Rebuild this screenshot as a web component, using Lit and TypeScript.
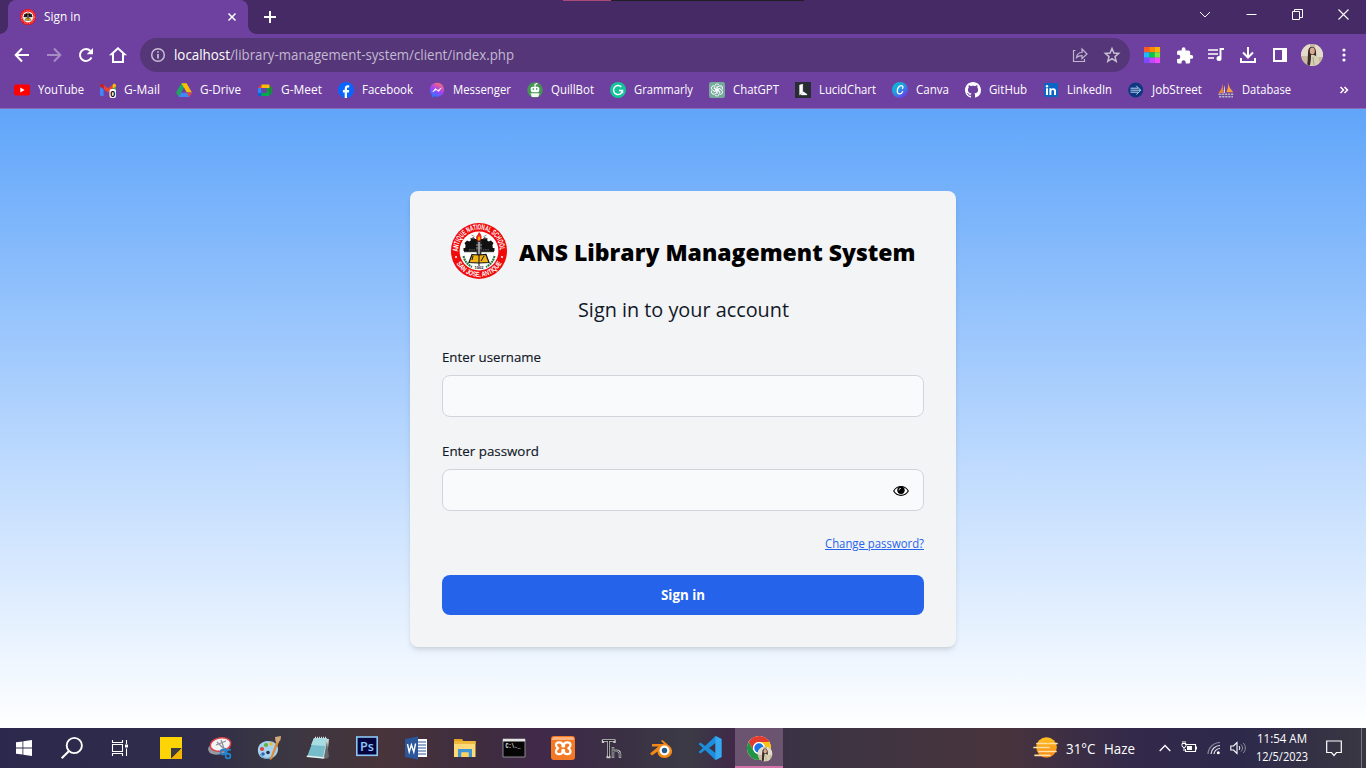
import { LitElement, html, svg, css } from "lit";
import { customElement, property } from "lit/decorators.js";

/* One line of text whose glyphs are condensed to an exact advance width. */
@customElement("fit-text")
class FitText extends LitElement {
  @property({ type: Number }) w = 0;
  @property() text = "";
  static styles = css`
    :host { display: inline-block; white-space: nowrap; flex: none; }
    .line { display: inline-block; transform-origin: 0 50%; white-space: pre; }
    :host([underlined]) .line { text-decoration: underline; }
  `;
  render() { return html`<span class="line">${this.text}</span>`; }
  updated() {
    const el = this.renderRoot.querySelector(".line") as HTMLElement;
    el.style.transform = "none";
    const natural = el.getBoundingClientRect().width;
    this.style.width = this.w + "px";
    if (natural) el.style.transform = `scaleX(${this.w / natural})`;
  }
}

const t = (text: string, w: number) => html`<fit-text .text=${text} .w=${w}></fit-text>`;
const icon = (w: number, h: number, box: string, body: unknown) =>
  html`<svg width=${w} height=${h} viewBox=${box} fill="none">${body}</svg>`;

/* School seal: gear, torch and open book inside a lettered ring */
const sealArt = svg`
  <circle cx="28" cy="28" r="28" fill="#f00a0c"/>
  <circle cx="28" cy="28" r="19.400" fill="#fff"/>
  <path d="M12.500 28v-3h2v-3l-1-2 2.600-2.500 2 1 1.700-1-.2-2.300 3.200-1 1.200 1.800h8l1.200-1.800 3.200 1-.2 2.300 1.700 1 2-1 2.600 2.500-1 2v3h2v3z" fill="#111"/>
  <path d="M14.500 24.500h27" stroke="#111" stroke-width="2"/>
  <path d="M13 28.600h30" stroke="#333" stroke-width="1.200"/>
  <path d="M18 26.800h20" stroke="#9a9a9a" stroke-width=".6" stroke-dasharray="1.500 .8"/>
  <path d="M25.600 18h4.800v17h-4.800z" fill="#333"/><path d="M27.300 19h1.400v14h-1.400z" fill="#c4c4c4"/>
  <path d="M25 25h6M25 22h6" stroke="#aaa" stroke-width=".8"/>
  <path d="M28 9c4 4 3 9 0 9s-4-4-1.500-6z" fill="#e9251c"/><path d="M28 13c2 2 1 4.500 0 4.500s-2-2 0-4.500z" fill="#ffb400"/>
  <path d="M20.500 12l3 1.500M35.500 12l-3 1.500M19.500 15.500l4 .3M36.500 15.500l-4 .3" stroke="#777" stroke-width=".7"/>
  <path d="M21 31.500l7 .5 7-.5 3 8-10 .5-10-.5z" fill="#f2b312" stroke="#111" stroke-width="1.200"/>
  <path d="M28 31v12M30 38l3-5M22 33l-1 4" stroke="#111" stroke-width="1"/>
  <path d="M12.500 33c1 5 4 8.500 8.500 11M43.500 33c-1 5-4 8.500-8.500 11" stroke="#257a3c" stroke-width="2.100" stroke-dasharray="2 .6"/>`;

const seal = () => icon(56, 56, "0 0 56 56", svg`
  <defs>
    <path id="arcTop" d="M7.200 29.500A20.900 20.900 0 1 1 48.800 29.500"/>
    <path id="arcBottom" d="M2.200 28A25.800 25.800 0 0 0 53.800 28"/>
  </defs>
  ${sealArt}
  <text font-family="Liberation Sans" font-weight="700" font-size="7.700" fill="#fff"><textPath href="#arcTop" startOffset="1" textLength="66" lengthAdjust="spacingAndGlyphs">ANTIQUE NATIONAL SCHOOL</textPath></text>
  <text font-family="Liberation Sans" font-weight="700" font-size="7.200" fill="#fff"><textPath href="#arcBottom" startOffset="13" textLength="55" lengthAdjust="spacingAndGlyphs">SAN JOSE, ANTIQUE</textPath></text>
  <circle cx="5" cy="34" r="1" fill="#fff"/><circle cx="51" cy="34" r="1" fill="#fff"/>
  <text x="28" y="46" font-family="Liberation Sans" font-weight="700" font-size="4" text-anchor="middle" fill="#111">1902</text>`);

const favicon = () => icon(16, 16, "0 0 56 56", svg`${sealArt}<circle cx="28" cy="28" r="23.500" stroke="#fff" stroke-opacity=".45" stroke-width="4" stroke-dasharray="3 3"/>`);

const portraitArt = svg`
  <path fill="#c9bba4" d="M0 0h22v22H0z"/><path fill="#e4dccb" d="M0 0h9v12H0zM14 0h8v13h-8z"/>
  <path d="M7 8c0-6.500 7.500-7 8-.5l.3 7.500-7.300 7H6.500z" fill="#3a2b28"/>
  <ellipse cx="11.300" cy="7" rx="2.500" ry="3.400" fill="#d9a990"/>
  <path d="M10 11h3l4.500 2.500 1.500 8.500H9z" fill="#d8d2b4"/><path d="M8 9l2 3-1 8H6.500z" fill="#3a2b28"/>
  <path d="M12 13l1 8" stroke="#aaa183"/>`;

const ytIcon = svg`<rect y="2.500" width="16" height="11" rx="2" fill="#f00"/><path d="M6.300 5.500v5L10.600 8z" fill="#fff"/>`;
const gmailIcon = svg`
  <path d="M0 4.500L3.600 7v7H1.200A1.200 1.200 0 0 1 0 12.800z" fill="#4285f4"/>
  <path d="M12.400 7L16 4.500v8.300a1.200 1.200 0 0 1-1.200 1.200h-2.400z" fill="#34a853"/>
  <path d="M12.400 3.200V7L16 4.500V3.600c0-1.600-1.700-2.300-2.900-1.400z" fill="#fbbc04"/>
  <path d="M3.600 7V3L8 6.300 12.400 3v4L8 10.400z" fill="#ea4335"/>
  <path d="M0 3.600v.9L3.600 7V3l-.8-.7C1.600 1.400 0 2 0 3.600z" fill="#c5221f"/>
  <rect x="9.500" y="7" width="6.500" height="9" rx="2" fill="#fff"/>
  <text x="12.700" y="14.800" font-family="Liberation Sans" font-weight="700" font-size="9" text-anchor="middle" fill="#000">0</text>`;
const driveIcon = svg`
  <path d="M5.400 1.200h5.200L5.300 10.400 2.700 15 .1 10.400z" fill="#1fa463"/>
  <path d="M5.400 1.200h5.200l5.300 9.200h-5.200z" fill="#fdbd00"/>
  <path d="M5.300 10.400h10.600L13.300 15H2.700z" fill="#4285f4"/><path d="M10.700 10.400h5.200L13.300 15z" fill="#ea4335"/>
  <path d="M8 6l2.500 4.400h-5z" fill="#6e41a0"/>`;
const meetIcon = svg`
  <path d="M1 6l3.500-3.500V6z" fill="#ea4335"/><path d="M4.500 2.500h7a1 1 0 0 1 1 1V6H4.500z" fill="#fbbc04"/>
  <path d="M1 6h3.500v5H1z" fill="#2684fc"/><path d="M1 11h3.500v3H2a1 1 0 0 1-1-1z" fill="#0066da"/>
  <path d="M4.500 10.800H9.500V6h3v7a1 1 0 0 1-1 1h-7z" fill="#00ac47"/>
  <path d="M10 8.200L14 4.500c.6-.4 1.300 0 1.300.7v6.500c0 .7-.8 1-1.300.6z" fill="#168c3c"/>
  <path d="M4.500 6h5v4.800h-5z" fill="#6e41a0"/>`;
const fbIcon = svg`<circle cx="8" cy="8" r="8" fill="#0866ff"/><path d="M6.700 16v-5.500H4.900V8h1.800V6.700c0-2.500 1.300-3.500 3.200-3.500.6 0 1.100.1 1.300.1v2.200h-1c-1 0-1.200.5-1.200 1.300V8h2.200l-.4 2.500H9V16z" fill="#fff"/>`;
const messengerIcon = svg`
  <defs><linearGradient id="msg" x1=".2" y1="1" x2=".7" y2="0"><stop offset="0" stop-color="#1283ff"/><stop offset=".5" stop-color="#a040fa"/><stop offset="1" stop-color="#ff6a70"/></linearGradient></defs>
  <path d="M8 .8C3.900.8.900 3.800.900 7.700c0 2.100.8 3.900 2.200 5.200v2.500l2.200-1.100c.9.300 1.800.4 2.700.4 4.100 0 7.100-3 7.100-7S12.100.8 8 .8z" fill="url(#msg)"/>
  <path d="M3.800 9.800l2.500-3.300 2.700 2 3.100-2.500-2.400 3.500L7.100 7.700z" fill="#fff" stroke="#fff" stroke-width=".6"/>`;
const quillIcon = svg`
  <circle cx="8" cy="8" r="7.800" fill="#459355"/><path d="M8 5V2.400l2.500-1" stroke="#fff" stroke-width="1.200"/>
  <rect x="3.800" y="4.700" width="8.400" height="5.500" rx="1.600" fill="#fff"/><path d="M5.700 6.200h1.400v1.600H5.700zM9 6.200h1.400v1.600H9z" fill="#459355"/>
  <path d="M3.500 11.200h9l-1.300 3.900H4.800z" fill="#f4f8ef"/>`;
const grammarlyIcon = svg`<circle cx="8" cy="8" r="8" fill="#15c39a"/><path d="M11.300 5A4.500 4.500 0 1 0 12.500 8.600H9M12.500 8.600v2.600" stroke="#fff" stroke-width="1.500"/>`;
const gptIcon = svg`<rect width="16" height="16" rx="2.200" fill="#75a99c"/>
  <g stroke="#fff" stroke-width=".9">${[0, 60, 120, 180, 240, 300].map(a => svg`<path transform=${`rotate(${a} 8 8)`} d="M5.700 6.700V4.300a2.400 2.400 0 0 1 4.500-1.100M5.700 6.700l2.300 1.300 3.500-2"/>`)}</g>`;
const lucidIcon = svg`<path fill="#282c33" d="M0 0h16v16H0z"/><path d="M4.500 3l3.300-1v8.500l-3.300 2.600zM8.500 9.800l3.500 2.500V13H5.700z" fill="#fff" stroke="#fff" stroke-width=".3"/>`;
const canvaIcon = svg`
  <defs><linearGradient id="canva" x1="0" y1="0" x2=".8" y2="1"><stop offset="0" stop-color="#00c4cc"/><stop offset=".5" stop-color="#2398e3"/><stop offset="1" stop-color="#7330e8"/></linearGradient></defs>
  <circle cx="8" cy="8" r="8" fill="url(#canva)"/><path d="M10.500 6.500c1-1.500.2-2.900-1.200-2.900-2.100 0-4 2.600-4 5.300 0 3.800 3.700 3.900 5.300.8" stroke="#fff" stroke-width="1.300" stroke-linecap="round"/>`;
const githubIcon = svg`<path d="M8 0C3.580 0 0 3.580 0 8c0 3.540 2.290 6.530 5.470 7.590.4.070.55-.17.55-.38 0-.19-.01-.82-.01-1.490-2.010.37-2.530-.49-2.690-.94-.09-.23-.48-.94-.82-1.130-.28-.15-.68-.52-.01-.53.63-.01 1.080.58 1.230.82.72 1.210 1.870.87 2.330.66.07-.52.28-.87.510-1.070-1.780-.2-3.640-.89-3.640-3.950 0-.87.31-1.590.82-2.150-.08-.2-.36-1.020.08-2.120 0 0 .67-.21 2.200.82.64-.18 1.320-.27 2-.27s1.360.09 2 .27c1.530-1.040 2.200-.82 2.200-.82.44 1.100.16 1.920.08 2.120.51.56.82 1.270.82 2.150 0 3.070-1.870 3.750-3.650 3.950.29.25.54.73.54 1.480 0 1.070-.01 1.930-.01 2.200 0 .21.15.46.55.38A8.010 8.010 0 0 0 16 8c0-4.420-3.580-8-8-8z" fill="#fff"/>`;
const linkedinIcon = svg`<rect x="1" y="1" width="14" height="14" rx="1" fill="#0a66c2"/><path d="M3 6.300h2V13H3zM6.400 6.300h1.900v.9c.9-1.600 4.700-1.600 4.700 1.600V13h-2V9.400c0-2-2.600-1.800-2.600 0V13h-2z" fill="#fff"/><circle cx="4" cy="4.200" r="1.200" fill="#fff"/>`;
const jobIcon = svg`<circle cx="7.700" cy="8" r="7.500" fill="#0d3880"/><path d="M2.500 6.200h7.500M2.500 8.200h10M2.500 10.200h7.500M8.300 3.800L12.700 8.200 8.300 12.600" stroke="#bcd7f1" stroke-width="1"/>`;
const databaseIcon = svg`<path d="M5 1v10H.5C3 8 4.500 5 5 1z" fill="#e9862c"/><path d="M9.800.3c1 4 2.700 7.200 5.700 10H8.300C10 7 10.300 4 9.800.3z" fill="#f7a13d"/><path d="M6.300 3c.6 3 1 5 .6 8H5.500z" fill="#d9d9e6"/><path d="M.5 12.300h14.800M1 14.800h14" stroke="#b9b6cb" stroke-width="1.500" stroke-dasharray="2.300 .8"/><path d="M1 13.500h14" stroke="#625480" stroke-dasharray="1.500 1"/>`;

const bookmarks: [string, number, unknown][] = [
  ["YouTube", 46, ytIcon], ["G-Mail", 36, gmailIcon], ["G-Drive", 41, driveIcon], ["G-Meet", 41, meetIcon],
  ["Facebook", 51, fbIcon], ["Messenger", 58, messengerIcon], ["QuillBot", 43, quillIcon], ["Grammarly", 59, grammarlyIcon],
  ["ChatGPT", 46, gptIcon], ["LucidChart", 57, lucidIcon], ["Canva", 33, canvaIcon], ["GitHub", 38, githubIcon],
  ["LinkedIn", 45, linkedinIcon], ["JobStreet", 50, jobIcon], ["Database", 49, databaseIcon],
];

const apps: unknown[] = [
  /* sticky notes */
  svg`<path d="M1 1h22v22H1z" fill="#fdd406"/><path d="M12 12h11L12 23z" fill="#3b3a3c"/><path d="M23 12v11H12z" fill="#f5b400"/>`,
  /* snipping tool */
  svg`<ellipse cx="11" cy="12" rx="11" ry="6.500" transform="rotate(-12 11 12)" fill="#969aa3"/><ellipse cx="12.500" cy="8.500" rx="10.300" ry="6.600" transform="rotate(-10 12.500 8.500)" fill="#f4f3f5" stroke="#d9444a" stroke-width="1.500"/><path d="M8 9l10-4M13 4l4 11M9 6l9 9" stroke="#8c8f97" stroke-width="1.200"/><circle cx="15" cy="16" r="2.400" stroke="#2186cf" stroke-width="1.700"/><circle cx="20" cy="20" r="2.400" stroke="#2186cf" stroke-width="1.700"/><path d="M17 15l6-1.500M19 17.500L17 12" stroke="#2186cf" stroke-width="1.700"/>`,
  /* paint */
  svg`<path d="M11 5C4 5 0 10 1 16c1 5 5 7 9 7 6 0 11-4 11-10 0-5-4-8-10-8z" fill="#a6d3ef"/><path d="M3 18c2 4 7 6 11 3" stroke="#5a94bd"/><circle cx="5" cy="13" r="2.100" fill="#db473d"/><circle cx="9" cy="9" r="2.100" fill="#62b33f"/><circle cx="14" cy="8" r="1.800" fill="#f0b82d"/><circle cx="6" cy="18" r="1.800" fill="#2c66b7"/><circle cx="11" cy="16.500" r="1.800" fill="#2e2d47"/><path d="M19.500 5l2.500 1-7 17-2.500 1z" fill="#e58a34"/><path d="M18 1l6-1-.5 4L21 7l-2.500-1.500z" fill="#d3a878"/>`,
  /* notepad */
  svg`<path d="M9 2l14 1-2 18-4 2-4-2z" fill="#d6dcd5"/><path d="M8 2h13l-4 19H1z" fill="#76bccb"/><path d="M8 2h13l-2 8-14-1z" fill="#a7dce2"/><path d="M1 19.500L16.500 21l-.5 1.500L.5 21z" fill="#e8f3f3"/><path d="M9 1.500h12" stroke="#ddd" stroke-width="1.500" stroke-dasharray="1 1"/><path d="M18 21l3-16 2 16-3 2z" fill="#63696d"/>`,
  /* photoshop */
  svg`<rect x="1.800" y="1" width="20.400" height="18.300" fill="#07053f" stroke="#89c6f4" stroke-width="1.600"/><text x="12" y="15" text-anchor="middle" font-family="Open Sans" font-size="12.500" font-weight="600" fill="#8bcaff" textLength="14" lengthAdjust="spacingAndGlyphs">Ps</text>`,
  /* word */
  svg`<path d="M12 3h11v18H12z" fill="#fff"/><path d="M14 6h8M14 9h8M14 12h8M14 15h8M14 18h8" stroke="#2b579a" stroke-width="1.200"/><path d="M1 3l13-2.500v23L1 21z" fill="#2b579a"/><path d="M3.500 8l1.700 8 2.200-7.200L9.800 16l1.800-8.500" stroke="#fff" stroke-width="1.400"/>`,
  /* explorer */
  svg`<path d="M1 3h8l2 3H1z" fill="#e1a320"/><path d="M1 5h21.500v16H1z" fill="#ffda78"/><path d="M1 5h21.500v3H1z" fill="#efb93e"/><path d="M5 13h14v8h-3.500v-4.500h-7V21H5z" fill="#3f96d2"/><path d="M8.500 16.500h7V21h-7z" fill="#ffd05e"/>`,
  /* terminal */
  svg`<path d="M1 3h22v18H1z" fill="#050505" stroke="#8c8c91"/><path d="M1 3h22v2.500H1z" fill="#e4e4e4"/><text x="3.500" y="12" font-family="Liberation Mono" font-size="6.500" font-weight="700" fill="#eee" textLength="15" lengthAdjust="spacingAndGlyphs">C:\\._</text>`,
  /* xampp */
  svg`<rect width="24" height="24" rx="3" fill="#f47925"/><path d="M1 3a2 2 0 0 1 2-2h18a2 2 0 0 1 2 2v1H1z" fill="#ffb27c"/><path d="M11.500 10.500V9c0-3.500-6.500-3.500-6.500 0 0 1.500.8 2.500 2.200 3.200C5.800 13 5 14 5 15.500c0 3.500 6.500 3.500 6.500 0V14h1.500v1.500c0 3.500 6.500 3.500 6.500 0 0-1.500-.8-2.500-2.200-3.300 1.400-.7 2.200-1.700 2.200-3.200 0-3.500-6.500-3.500-6.500 0v1.500z" stroke="#fff" stroke-width="2.200" stroke-linejoin="round"/>`,
  /* thonny */
  svg`<path d="M2.500 4.500h12.500M8.500 5v16M3 3.500V7M14.500 3.500V7M6.500 21h4M13 11v11M13 15.500c5-2 7 0 7 2.500v4" stroke="#c9c9c9" stroke-width="2.400"/><path d="M3 4.500h11.500M8.500 5v15.500M13 11.500v10M13.500 15.500c4-1.500 6.500 0 6.500 2.500v3.500" stroke="#242526" stroke-width="1"/>`,
  /* blender */
  svg`<path d="M1 17.500l8.500-7H3V8h12L12 5l1.500-1 8 7c4 5 0 11-6 11-4.500 0-7-3-7-6.500L3 19.500z" fill="#f18818"/><circle cx="15.500" cy="14.500" r="5" fill="#fff"/><circle cx="15.500" cy="14.500" r="2.700" fill="#205c8d"/>`,
  /* vs code */
  svg`<path d="M17.500 0L23.500 3v18l-6 3L7 14l-4.500 3.500L.5 16 5 12 .5 8l2-1.500L7 10z M17.500 7L11 12l6.500 5z" fill="#1c8fdc" fill-rule="evenodd"/><path d="M17.500 0L23.500 3v18l-6 3z" fill="#37a8f0"/>`,
];

@customElement("app-root")
class AppRoot extends LitElement {
  static styles = css`
    :host { display: flex; flex-direction: column; width: 1366px; height: 768px; overflow: hidden; font-family: "Open Sans", "Noto Sans", sans-serif; color: #fff; }
    * { box-sizing: border-box; }
    svg { display: block; flex: none; overflow: visible; }
    .tabs { height: 34px; background: #462a65; display: flex; position: relative; }
    .mediaStrip { position: absolute; top: 0; left: 563px; width: 241px; height: 1px; background: linear-gradient(90deg, #a94a79 0 48px, #211d24 48px); }
    .tab { width: 240px; margin-left: 8px; background: #6e41a0; border-radius: 8px 8px 0 0; display: flex; align-items: center; padding: 0 12px; font-size: 12px; position: relative; }
    .tab::before, .tab::after { content: ""; position: absolute; bottom: 0; width: 8px; height: 8px; }
    .tab::before { left: -8px; background: radial-gradient(circle at 0 0, transparent 7.500px, #6e41a0 8px); }
    .tab::after { right: -8px; background: radial-gradient(circle at 100% 0, transparent 7.500px, #6e41a0 8px); }
    .tabTitle { margin: -1px 0 0 8px; flex: 1; }
    .newTab { margin: 11px 0 0 16px; }
    .windowBtns { margin-left: auto; display: flex; align-items: center; gap: 35px; padding: 0 17px 6px 0; }
    .toolbar { height: 42px; background: #6e41a0; display: flex; align-items: center; padding-left: 12px; }
    .nav { display: flex; gap: 12px; width: 128px; }
    .omnibox { width: 990px; height: 34px; border-radius: 17px; background: #553678; display: flex; align-items: center; padding: 0 9px; font-size: 14px; color: #c4b9d2; }
    .url { margin: -1px 0 0 7px; display: flex; }
    .host { color: #fff; }
    .pageActions { margin-left: auto; display: flex; gap: 14px; }
    .extensions { display: flex; align-items: center; gap: 12px; margin-left: 12px; }
    .sheet { padding: 0 2px; }
    .avatar { margin: 0 -1px 0 -1px; }
    .bookmarks { height: 32px; background: #6e41a0; display: flex; align-items: center; gap: 16px; padding: 0 16px 4px 14px; font-size: 12px; }
    .bookmark { display: flex; align-items: center; gap: 8px; }
    .name { margin-top: -1px; }
    .more { margin-left: auto; }
    .edge { height: 1px; background: #8b6bb1; }
    .page { height: 619px; background: linear-gradient(180deg, #60a5fa, #bfdbfe 58%, #fff); display: flex; justify-content: center; align-items: flex-start; padding-top: 82px; color: #111827; }
    .card { width: 546px; height: 456px; padding: 32px; border-radius: 8px; background: #f3f4f6; box-shadow: 0 4px 6px -1px #0000001a, 0 2px 4px -2px #0000001a; display: flex; flex-direction: column; }
    .brand { height: 56px; display: flex; align-items: center; justify-content: center; gap: 12px; }
    .title { font-size: 23.500px; font-weight: 800; color: #000; line-height: 32px; padding-top: 2px; }
    .subtitle { margin-top: 16px; text-align: center; font-size: 20px; line-height: 29px; height: 28px; font-weight: 500; }
    .label { height: 20px; line-height: 20px; margin-top: 24px; font-size: 13.500px; font-weight: 500; -webkit-text-stroke: .15px; }
    .field { height: 42px; margin-top: 8px; border: 1px solid #d1d5db; border-radius: 8px; background: #f9fafb; display: flex; align-items: center; justify-content: flex-end; padding-right: 14px; }
    .eye { padding-top: 2px; }
    .change { margin-top: 24px; height: 16px; line-height: 17px; text-align: right; color: #2563eb; font-size: 12px; }
    .submit { margin-top: 24px; height: 40px; line-height: 40px; text-align: center; border-radius: 8px; background: #2563eb; color: #fff; font-size: 14px; font-weight: 700; }
    .taskbar { height: 40px; display: flex; align-items: center; background: linear-gradient(90deg, #2b284d, #302c4a 200px, #393743 270px, #48343a 380px, #3e2c40 490px, #41294a 540px, #3a3044 620px, #3b3b46 690px, #402a48 730px, #3b3444 800px, #48343c 1000px, #33294a 1130px, #2d294b 1240px, #393741); }
    .cell { width: 48px; height: 40px; display: flex; align-items: center; justify-content: center; }
    .apps { display: grid; grid-template-columns: repeat(13, 48px); gap: 1px; margin-left: 3px; }
    .active { background: #6a5470; border-bottom: 2px solid #d372a9; padding: 3px 0 0 2px; }
    .tray { margin-left: auto; display: flex; align-items: center; height: 40px; font-size: 14px; }
    .temp { margin-left: 8px; }
    .haze { margin-left: 9px; }
    .status { display: flex; align-items: center; gap: 10px; margin: 0 10px 0 24px; }
    .clock { display: flex; flex-direction: column; align-items: center; width: 52px; font-size: 12px; line-height: 18px; padding-bottom: 1px; }
    .notify { margin: 0 19px 0 18px; }
    .peek { width: 1px; height: 40px; background: #77747f; margin-right: 4px; }
  `;

  private sheet() {
    const colors = ["#ff5722", "#ff8b00", "#ffb000", "#22b8ff", "#04c94c", "#75e743", "#7d4bff", "#c148ff", "#f347ff"];
    return icon(16, 16, "0 0 16 16", colors.map((c, i) => svg`<rect x=${(i % 3) * 5.33} y=${Math.floor(i / 3) * 5.33} width="5.4" height="5.4" fill=${c}></rect>`));
  }

  render() {
    return html`
      <div class="tabs">
        <div class="mediaStrip"></div>
        <div class="tab">${favicon()}<span class="tabTitle">${t("Sign in", 36.5)}</span>
          ${icon(8, 8, "0 0 8 8", svg`<path d="M.5.5l7 7M7.500.5l-7 7" stroke="#fff" stroke-width="1.500"/>`)}</div>
        <div class="newTab">${icon(12, 12, "0 0 12 12", svg`<path d="M6 0v12M0 6h12" stroke="#fff" stroke-width="2"/>`)}</div>
        <div class="windowBtns">
          ${icon(12, 11, "0 0 12 11", svg`<path d="M1 3l5 5 5-5" stroke="#fff"/>`)}
          ${icon(11, 11, "0 0 11 11", svg`<path d="M.5 5.500h10" stroke="#fff"/>`)}
          ${icon(11, 11, "0 0 11 11", svg`<path d="M.5 2.500h7v8h-7zM2.500 2.500v-2h8v8h-3" stroke="#fff"/>`)}
          ${icon(11, 11, "0 0 11 11", svg`<path d="M.5.5l10 10M10.500.5l-10 10" stroke="#fff" stroke-width="1.100"/>`)}
        </div>
      </div>
      <div class="toolbar">
        <div class="nav">
          ${icon(20, 20, "0 0 20 20", svg`<path d="M17 10H4M10 3.500L3.700 10l6.300 6.500" stroke="#fff" stroke-width="2"/>`)}
          ${icon(20, 20, "0 0 20 20", svg`<path d="M3 10h13M10 3.500l6.300 6.500-6.300 6.500" stroke="#a78bc5" stroke-width="2"/>`)}
          ${icon(20, 20, "0 0 20 20", svg`<path d="M15.500 12.300A6 6 0 1 1 14.500 6" stroke="#fff" stroke-width="2"/><path d="M17 3v6.300h-6.300z" fill="#fff"/>`)}
          ${icon(20, 20, "0 0 20 20", svg`<path d="M10 3.300L3.500 9.300H5V17h10V9.300h1.500z" stroke="#fff" stroke-width="2"/>`)}
        </div>
        <div class="omnibox">
          ${icon(18, 18, "0 0 18 18", svg`<circle cx="9" cy="9" r="6.300" stroke="#c8bfd3" stroke-width="1.500"/><path d="M9 8v4.500M9 5.200v1.600" stroke="#c8bfd3" stroke-width="1.700"/>`)}
          <div class="url"><span class="host">${t("localhost", 56)}</span>${t("/library-management-system/client/index.php", 284)}</div>
          <div class="pageActions">
            ${icon(18, 18, "0 0 18 18", svg`<path d="M4.500 4.500H2.500v11h11V13M5.500 11.500c.5-4 2.500-5 5.500-5V3l5 5-5 4.700V9.700c-2.500 0-4 .3-5.500 1.800z" stroke="#c1b5cf" stroke-width="1.200"/>`)}
            ${icon(18, 18, "0 0 18 18", svg`<path d="M9 2.500l1.900 4.500 4.800.4-3.700 3.200 1.200 4.700L9 12.700l-4.200 2.600L6 10.600 2.300 7.400 7.100 7z" stroke="#c8bfd3" stroke-width="1.500"/>`)}
          </div>
        </div>
        <div class="extensions">
          <span class="sheet">${this.sheet()}</span>
          ${icon(20, 20, "-2 -2 26 26", svg`<path d="M20.500 11H19V7a2 2 0 0 0-2-2h-4V3.500a2.500 2.500 0 0 0-5 0V5H4a2 2 0 0 0-2 2v3.800h1.500a2.700 2.700 0 0 1 0 5.400H2V20c0 1.100.9 2 2 2h3.800v-1.500a2.700 2.700 0 0 1 5.400 0V22H17a2 2 0 0 0 2-2v-4h1.500a2.500 2.500 0 0 0 0-5z" fill="#fff"/>`)}
          ${icon(20, 20, "0 0 20 20", svg`<path d="M2 5h10M2 9h10M2 13h6" stroke="#fff" stroke-width="1.600"/><path d="M18 4h-3.500v8.500" stroke="#fff" stroke-width="1.900"/><circle cx="13" cy="13.500" r="2.500" fill="#fff"/>`)}
          ${icon(20, 20, "0 0 20 20", svg`<path d="M10 2v10M5 7.500l5 5 5-5M3 13v4h14v-4" stroke="#fff" stroke-width="2"/>`)}
          ${icon(20, 20, "0 0 20 20", svg`<path d="M4 4h12v12H4z" stroke="#fff" stroke-width="2"/><path d="M12 3h5v14h-5z" fill="#fff"/>`)}
          <span class="avatar">${icon(22, 22, "0 0 22 22", svg`<clipPath id="face"><circle cx="11" cy="11" r="11"/></clipPath><g clip-path="url(#face)">${portraitArt}</g>`)}</span>
          ${icon(20, 20, "0 0 20 20", svg`<circle cx="10" cy="5" r="1.600" fill="#fff"/><circle cx="10" cy="10" r="1.600" fill="#fff"/><circle cx="10" cy="15" r="1.600" fill="#fff"/>`)}
        </div>
      </div>
      <div class="bookmarks">
        ${bookmarks.map(([name, w, body]) => html`<div class="bookmark">${icon(16, 16, "0 0 16 16", body)}<span class="name">${t(name, w)}</span></div>`)}
        <span class="more">${icon(12, 10, "0 0 12 10", svg`<path d="M2.500 2l3 3-3 3M6.500 2l3 3-3 3" stroke="#fff" stroke-width="1.500"/>`)}</span>
      </div>
      <div class="edge"></div>
      <div class="page">
        <div class="card">
          <div class="brand">${seal()}<div class="title">${t("ANS Library Management System", 396.5)}</div></div>
          <div class="subtitle">${t("Sign in to your account", 211)}</div>
          <div class="label">${t("Enter username", 99)}</div>
          <div class="field"></div>
          <div class="label">${t("Enter password", 97)}</div>
          <div class="field"><span class="eye">${icon(16, 12, "0 0 16 12", svg`<path d="M.7 6C4 0 12 0 15.300 6 12 11.800 4 11.800.7 6z" stroke="#000" stroke-width="1.100" fill="#fff"/><circle cx="8" cy="5.300" r="3.700" fill="#000"/><path d="M6 5.300A2 2 0 0 1 8 3.300" stroke="#fff" stroke-width=".8"/>`)}</span></div>
          <div class="change"><fit-text underlined .text=${"Change password?"} .w=${99}></fit-text></div>
          <div class="submit">${t("Sign in", 44)}</div>
        </div>
      </div>
      <div class="taskbar">
        <div class="cell">${icon(16, 16, "0 0 16 16", svg`<path d="M0 2.300L6.500 1.400v6.200H0zM7.300 1.300L16 0v7.600H7.300zM0 8.400h6.500v6.200L0 13.700zM7.300 8.400H16V16l-8.700-1.300z" fill="#fff"/>`)}</div>
        <div class="cell">${icon(22, 22, "0 0 22 22", svg`<circle cx="13.300" cy="8.500" r="7.600" stroke="#fff" stroke-width="1.900"/><path d="M8 14l-7.300 7.300" stroke="#fff" stroke-width="2.100"/>`)}</div>
        <div class="cell">${icon(16, 16, "0 0 16 16", svg`<path d="M.5 0v2.500h10V0M.5 16v-2.500h10V16M.5 4.500h10v7H.5zM14.500 0v4M14.500 8.500V16" stroke="#fff" stroke-width="1.100"/><path d="M13 4.500h3v3h-3z" fill="#fff"/>`)}</div>
        <div class="apps">
          ${apps.map(a => html`<div class="cell">${icon(24, 24, "0 0 24 24", a)}</div>`)}
          <div class="cell active">${icon(26, 26, "0 0 26 26", svg`
            <circle cx="12" cy="12" r="12" fill="#fff"/><path d="M1.600 6A12 12 0 0 1 22.400 6H12a6 6 0 0 0-5.200 9z" fill="#e33b2e"/>
            <path d="M22.400 6A12 12 0 0 1 12 24l5.200-9A6 6 0 0 0 12 6z" fill="#fbc116"/><path d="M12 24A12 12 0 0 1 1.600 6l5.200 9a6 6 0 0 0 10.400 0z" fill="#229342"/>
            <circle cx="12" cy="12" r="6" fill="#fff"/><circle cx="12" cy="12" r="4.700" fill="#1a73e8"/>
            <clipPath id="badge"><circle cx="11" cy="11" r="11"/></clipPath>
            <g transform="translate(10.500 10.500) scale(.68)" clip-path="url(#badge)">${portraitArt}</g>`)}</div>
        </div>
        <div class="tray">
          ${icon(24, 22, "0 0 24 22", svg`<defs><linearGradient id="sun" x2="0" y2="1"><stop stop-color="#ffc122"/><stop offset="1" stop-color="#f58216"/></linearGradient></defs><circle cx="12.500" cy="10.500" r="10.300" fill="url(#sun)"/><path d="M3 6.500h10M15 6.500h8M0 10.500h15M5 14.500h17M1 18.300h15" stroke="#ffe0a0" stroke-width="1.700" stroke-linecap="round"/>`)}
          <span class="temp">${t("31°C", 29.5)}</span><span class="haze">${t("Haze", 31)}</span>
          <div class="status">
            ${icon(12, 12, "0 0 12 12", svg`<path d="M.7 9L6 3.500 11.300 9" stroke="#fff" stroke-width="1.300"/>`)}
            ${icon(16, 14, "0 0 16 14", svg`<path d="M4 3.500h10.500v7H4.500V8" stroke="#fff" stroke-width="1.100"/><path d="M14.500 5.500H16v3h-1.500zM6 5h5v4H6z" fill="#fff"/><path d="M1 2.500h4v2a2 2 0 0 1-4 0zM2 0v2M4 0v2M3 6v4" stroke="#fff"/>`)}
            ${icon(13, 14, "0 0 13 14", svg`<path d="M1 13A12 12 0 0 1 13 1.500" stroke="#918d9f" stroke-width="1.200"/><path d="M4 13a9 9 0 0 1 9-8.500M7 13a6 6 0 0 1 6-5.500" stroke="#e4e2e9" stroke-width="1.200"/><circle cx="11.300" cy="11.700" r="1.500" fill="#fff"/>`)}
            ${icon(16, 14, "0 0 16 14", svg`<path d="M.8 5h2.700L7 1.500v11L3.500 9H.8z" stroke="#fff" stroke-width="1.100"/><path d="M9 5c1 1.200 1 2.800 0 4" stroke="#fff"/><path d="M11 3.500c2 2 2 5 0 7M13.300 2c2.700 3 2.700 7 0 10" stroke="#9591a1"/>`)}
          </div>
          <div class="clock">${t("11:54 AM", 50)}${t("12/5/2023", 52)}</div>
          <div class="notify">${icon(16, 17, "0 0 16 17", svg`<path d="M.7 1h14.600v11.500h-4.800L8 15.500 5.500 12.500H.7z" stroke="#fff" stroke-width="1.200"/>`)}</div>
          <div class="peek"></div>
        </div>
      </div>`;
  }
}
